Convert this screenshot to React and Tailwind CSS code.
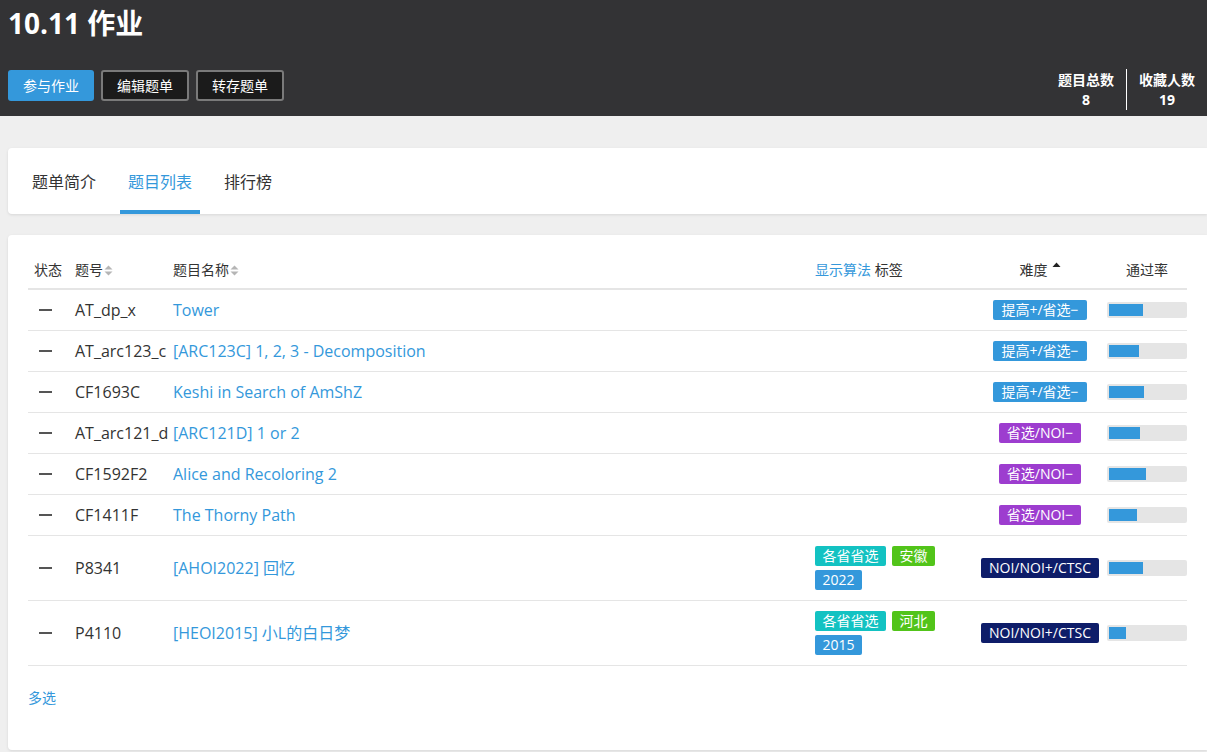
import React from 'react'

const FONT = { fontFamily: '"Open Sans", "Noto Sans CJK SC", sans-serif' }

const diffColors = {
  '提高+/省选−': 'bg-[#3498db]',
  '省选/NOI−': 'bg-[#9d3dcf]',
  'NOI/NOI+/CTSC': 'bg-[#0e1d69]',
}

const tagColors = {
  region: 'bg-[#13c2c2]',
  province: 'bg-[#52c41a]',
  year: 'bg-[#3498db]',
}

const problems = [
  { pid: 'AT_dp_x', title: 'Tower', diff: '提高+/省选−', rate: 34 },
  { pid: 'AT_arc123_c', title: '[ARC123C] 1, 2, 3 - Decomposition', diff: '提高+/省选−', rate: 30 },
  { pid: 'CF1693C', title: 'Keshi in Search of AmShZ', diff: '提高+/省选−', rate: 35 },
  { pid: 'AT_arc121_d', title: '[ARC121D] 1 or 2', diff: '省选/NOI−', rate: 31 },
  { pid: 'CF1592F2', title: 'Alice and Recoloring 2', diff: '省选/NOI−', rate: 37 },
  { pid: 'CF1411F', title: 'The Thorny Path', diff: '省选/NOI−', rate: 28 },
  {
    pid: 'P8341', title: '[AHOI2022] 回忆', diff: 'NOI/NOI+/CTSC', rate: 34,
    tags: [['各省省选', 'region'], ['安徽', 'province'], ['2022', 'year']],
  },
  {
    pid: 'P4110', title: '[HEOI2015] 小L的白日梦', diff: 'NOI/NOI+/CTSC', rate: 17,
    tags: [['各省省选', 'region'], ['河北', 'province'], ['2015', 'year']],
  },
]

function SortIcon() {
  return (
    <svg width="9" height="11" viewBox="0 0 9 11" className="ml-[1px] inline-block">
      <path d="M4.5 0.5 L8.5 4.5 H0.5 Z" fill="#b5b5b5" />
      <path d="M4.5 10.5 L8.5 6.5 H0.5 Z" fill="#b5b5b5" />
    </svg>
  )
}

function UpIcon() {
  return (
    <svg width="9" height="6" viewBox="0 0 9 6" className="ml-[4px] inline-block -translate-y-[5px]">
      <path d="M4.5 0.5 L8.5 5 H0.5 Z" fill="#222" />
    </svg>
  )
}

export default function App() {
  return (
    <div className="min-h-[752px] bg-[#efefef] text-[#333]" style={FONT}>
      <header className="h-[116px] bg-[#333335] pl-2 pt-[5px]">
        <h1 className="text-[28px] font-bold leading-[36px] text-white">10.11 作业</h1>
        <div className="mt-[28px] flex items-start justify-between">
          <div className="mt-[1px] flex gap-[7px] text-[14px] text-white">
            <button className="h-[31px] rounded-[3px] bg-[#3498db] px-[15px]">参与作业</button>
            <button className="h-[31px] rounded-[3px] border-2 border-[#7a7a7a] bg-[#1b1b1b] px-[14px]">编辑题单</button>
            <button className="h-[31px] rounded-[3px] border-2 border-[#7a7a7a] bg-[#1b1b1b] px-[14px]">转存题单</button>
          </div>
          <div className="flex text-[14px] font-bold leading-[20px] text-white">
            <div className="flex flex-col items-center px-3 pt-[1px]">
              <span>题目总数</span>
              <span>8</span>
            </div>
            <div className="h-[41px] w-px bg-white" />
            <div className="flex flex-col items-center px-3 pt-[1px]">
              <span>收藏人数</span>
              <span>19</span>
            </div>
          </div>
        </div>
      </header>

      <div className="pl-2 pt-8">
        <div className="flex h-[66px] gap-4 rounded-l-[4px] bg-white pl-4 text-[16px] shadow-[0_1px_3px_rgba(0,0,0,0.1)]">
          <div className="flex items-center px-2 pt-[1px]">题单简介</div>
          <div className="flex items-center border-b-4 border-[#3498db] px-2 pt-[5px] text-[#3498db]">题目列表</div>
          <div className="flex items-center px-2 pt-[1px]">排行榜</div>
        </div>

        <div className="mt-[21px] rounded-l-[4px] bg-white px-5 pb-[42px] pt-5 shadow-[0_1px_3px_rgba(0,0,0,0.1)]">
          <div className="flex border-b-2 border-[#e5e5e5] pb-2 pt-[5px] text-[14px] leading-[20px]">
            <div className="w-[40px] pl-[6px]">状态</div>
            <div className="flex w-[98px] items-center pl-[7px]">题号<SortIcon /></div>
            <div className="flex flex-1 items-center pl-[7px]">题目名称<SortIcon /></div>
            <div className="w-[172px] pl-[7px]">
              <span className="text-[#3498db]">显示算法</span> 标签
            </div>
            <div className="flex w-[120px] items-center justify-center">难度<UpIcon /></div>
            <div className="w-[87px] pl-[7px]">
              <div className="w-[80px] text-center">通过率</div>
            </div>
          </div>

          {problems.map((p) => (
            <div key={p.pid} className="flex items-center border-b border-[#e5e5e5] py-[10px] text-[16px] leading-[20px]">
              <div className="flex w-[40px] pl-[11px]">
                <span className="h-[2px] w-[13px] bg-[#555]" />
              </div>
              <div className="w-[98px] whitespace-nowrap pl-[7px]">{p.pid}</div>
              <div className="flex-1 pl-[7px] text-[#3498db]">{p.title}</div>
              <div className="w-[172px] pl-[7px] pr-[7px]">
                {p.tags && (
                  <div className="flex flex-wrap gap-x-[6px] gap-y-[4px] text-[14px] text-white">
                    {p.tags.map(([t, k]) => (
                      <span key={t} className={`h-[20px] rounded-[2px] px-[7.5px] leading-[20px] ${tagColors[k]}`}>{t}</span>
                    ))}
                  </div>
                )}
              </div>
              <div className="flex w-[120px] justify-center">
                <span className={`h-[20px] rounded-[2px] px-[8px] text-[14px] leading-[20px] text-white ${diffColors[p.diff]}`}>{p.diff}</span>
              </div>
              <div className="w-[87px] pl-[7px]">
                <div className="h-[16px] w-[80px] rounded-[2px] bg-[#e5e5e5] p-[2px]">
                  <div className="h-[12px] bg-[#3498db]" style={{ width: p.rate }} />
                </div>
              </div>
            </div>
          ))}

          <div className="mt-[22px] text-[14px] leading-[20px] text-[#3498db]">多选</div>
        </div>
      </div>
    </div>
  )
}
